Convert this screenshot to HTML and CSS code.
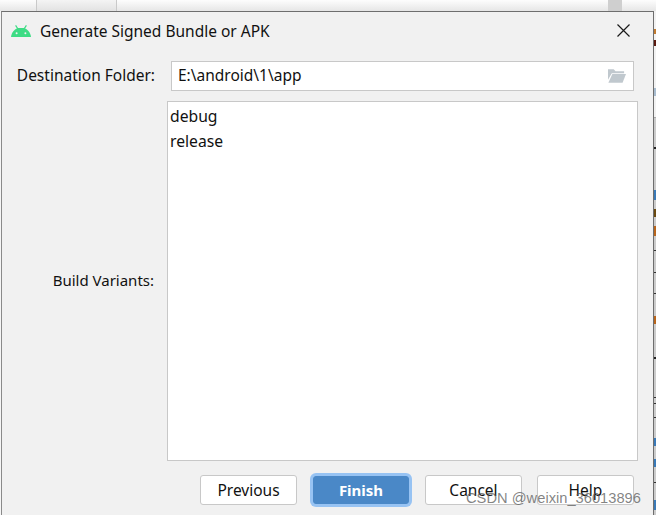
FILE: index.html
```html
<!DOCTYPE html>
<html lang="en">
<head>
    <meta charset="UTF-8">
    <meta name="viewport" content="width=device-width, initial-scale=1.0">
    <title>Generate Signed Bundle or APK</title>
    <link rel="stylesheet" href="styles.css">
</head>
<body>
    <div class="backdrop">
        <div class="tab"></div>
        <div class="scroll-thumb"></div>
    </div>
    <div class="main">
        <div class="dialog">
            <div class="titlebar">
                <svg class="android" width="20" height="12" viewBox="0 0 20 12">
                    <path d="M0 12 C0.4 7.6 3.4 4 7 3 L13 3 C16.6 4 19.6 7.6 20 12 Z" fill="#3ddc84"/>
                    <path d="M4.6 0.4 L7 4 M15.4 0.4 L13 4" stroke="#3ddc84" stroke-width="1.2" fill="none"/>
                    <circle cx="5.6" cy="8.2" r="1" fill="#f1f1f1"/>
                    <circle cx="14.4" cy="8.2" r="1" fill="#f1f1f1"/>
                </svg>
                <span class="title">Generate Signed Bundle or APK</span>
                <svg class="close" width="13" height="13" viewBox="0 0 13 13">
                    <path d="M0.5 0.5 L12.5 12.5 M12.5 0.5 L0.5 12.5" stroke="#1a1a1a" stroke-width="1.2" fill="none"/>
                </svg>
            </div>
            <div class="row-folder">
                <label class="label">Destination Folder:</label>
                <div class="path-field">
                    <span>E:\android\1\app</span>
                    <svg width="18" height="14" viewBox="0 0 19 14">
                        <path d="M0 0 H6 L8 2 H17 V4 H4 L0 11 Z" fill="#c0c8ce"/>
                        <path d="M4.6 5 H19 L15.4 14 H0.4 Z" fill="#c0c8ce"/>
                    </svg>
                </div>
            </div>
            <div class="row-variants">
                <label class="label">Build Variants:</label>
                <ul class="variant-list">
                    <li>debug</li>
                    <li>release</li>
                </ul>
            </div>
            <div class="buttons">
                <button>Previous</button>
                <button class="primary">Finish</button>
                <button>Cancel</button>
                <button>Help</button>
            </div>
        </div>
        <div class="side"></div>
    </div>
    <div class="watermark">CSDN @weixin_36013896</div>
</body>
</html>
```

FILE: styles.css
```css
html, body {
    margin: 0;
    height: 515px;
    overflow: hidden;
}
body {
    font-family: "Noto Sans", sans-serif;
    color: #111;
    background-color: #f6f6f6;
    position: relative;
}
.backdrop {
    height: 11px;
    display: flex;
    background: linear-gradient(#fdfdfd, #e6e6e6);
}
.tab {
    width: 79px;
    margin-left: 36px;
    border-left: 1px solid #c9c9c9;
    border-right: 1px solid #c9c9c9;
    background: linear-gradient(#f4f4f4, #e2e2e2);
}
.scroll-thumb {
    width: 14px;
    margin-left: 491px;
    background-color: #cfcfcf;
}
.main {
    display: flex;
    padding-left: 1px;
}
.dialog {
    width: 653px;
    height: 504px;
    box-sizing: border-box;
    background-color: #f1f1f1;
    border-top: 1px solid #6e6e6e;
    border-left: 1px solid #8a8a8a;
    border-right: 1px solid #6e6e6e;
}
/* bits of the window behind the dialog, top to bottom */
.side {
    width: 2px;
    height: 504px;
    background: linear-gradient(
        #f2f2f2 0 18px, #c07a30 18px 23px, #f2f2f2 23px 29px, #5a1a10 29px 35px,
        #f2f2f2 35px 77px, #a8bccf 77px 85px, #f2f2f2 85px 106px, #aaa 106px 107px,
        #ccc 107px 136px, #222 136px 138px, #ccc 138px 179px, #3a7ab8 179px 189px,
        #ccc 189px 198px, #6a4a10 198px 206px, #ccc 206px 215px, #b8651c 215px 225px,
        #ccc 225px 239px, #333 239px 240px, #ccc 240px 261px, #333 261px 262px,
        #ccc 262px 282px, #333 282px 283px, #ccc 283px 305px, #b8651c 305px 313px,
        #ccc 313px 346px, #222 346px 348px, #ccc 348px 386px, #333 386px 387px,
        #ccc 387px 392px, #333 392px 393px, #ccc 393px 406px, #333 406px 407px,
        #ccc 407px 427px, #3a7ab8 427px 435px, #ccc 435px 448px, #3a7ab8 448px 456px,
        #ccc 456px 471px, #333 471px 472px, #ccc 472px 489px, #3a7ab8 489px 499px,
        #ccc 499px
    );
}
.titlebar {
    height: 37px;
    display: flex;
    align-items: center;
    padding-left: 9px;
}
.title {
    font-size: 15.5px;
    margin-left: 9px;
    flex: 1;
}
.close {
    margin-right: 23px;
}
.label {
    font-size: 15.5px;
    width: 153px;
    padding-bottom: 2px;
    text-align: right;
    flex-shrink: 0;
}
.row-folder {
    display: flex;
    align-items: center;
    margin-top: 12px;
}
.path-field {
    width: 463px;
    height: 30px;
    box-sizing: border-box;
    margin-left: 16px;
    padding: 0 7px 0 6px;
    display: flex;
    align-items: center;
    justify-content: space-between;
    background-color: #fff;
    border: 1px solid #c8c8c8;
    font-size: 15.5px;
}
.path-field span {
    padding-bottom: 2px;
}
.row-variants {
    display: flex;
    align-items: center;
    margin-top: 10px;
}
.row-variants .label {
    font-size: 15px;
    width: 152px;
    margin-right: 1px;
}
.variant-list {
    list-style: none;
    margin: 0 0 0 12px;
    padding: 2px;
    width: 471px;
    height: 360px;
    box-sizing: border-box;
    background-color: #fff;
    border: 1px solid #c8c8c8;
    font-size: 15.7px;
    align-self: flex-start;
}
.variant-list li {
    height: 25px;
    line-height: 25px;
}
.buttons {
    display: flex;
    justify-content: flex-end;
    align-items: center;
    gap: 15px;
    margin-top: 14px;
    padding-right: 19px;
}
button {
    width: 97px;
    height: 30px;
    padding: 0 0 1px;
    font-family: inherit;
    font-size: 15.5px;
    color: #111;
    background-color: #fff;
    border: 1px solid #c8c8c8;
    border-radius: 3px;
}
button.primary {
    width: 96px;
    height: 28px;
    margin: 0 1px;
    color: #fff;
    font-size: 15px;
    font-weight: bold;
    background-color: #4a88c7;
    border-color: #4a88c7;
    box-shadow: 0 0 0 3px #97c3f3;
}
.watermark {
    position: absolute;
    left: 466px;
    top: 490px;
    font-family: "Liberation Sans", sans-serif;
    font-size: 14.7px;
    color: rgba(90, 90, 90, 0.75);
}
```
